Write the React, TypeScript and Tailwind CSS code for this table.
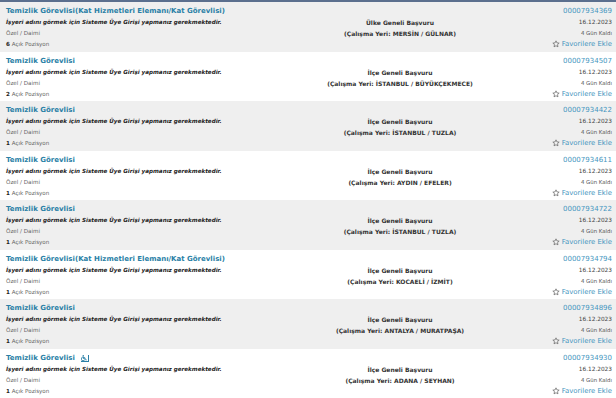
import { FaWheelchair } from "react-icons/fa"

type Job = {
    title: string
    count: number
    scope: string
    place: string
    no: string
    access?: boolean
}

const jobs: Job[] = [
    { title: "Temizlik Görevlisi(Kat Hizmetleri Elemanı/Kat Görevlisi)", count: 6, scope: "Ülke Geneli Başvuru", place: "MERSİN / GÜLNAR", no: "00007934369" },
    { title: "Temizlik Görevlisi", count: 2, scope: "İlçe Geneli Başvuru", place: "İSTANBUL / BÜYÜKÇEKMECE", no: "00007934507" },
    { title: "Temizlik Görevlisi", count: 1, scope: "İlçe Geneli Başvuru", place: "İSTANBUL / TUZLA", no: "00007934422" },
    { title: "Temizlik Görevlisi", count: 1, scope: "İlçe Geneli Başvuru", place: "AYDIN / EFELER", no: "00007934611" },
    { title: "Temizlik Görevlisi", count: 1, scope: "İlçe Geneli Başvuru", place: "İSTANBUL / TUZLA", no: "00007934722" },
    { title: "Temizlik Görevlisi(Kat Hizmetleri Elemanı/Kat Görevlisi)", count: 1, scope: "İlçe Geneli Başvuru", place: "KOCAELİ / İZMİT", no: "00007934794" },
    { title: "Temizlik Görevlisi", count: 1, scope: "İlçe Geneli Başvuru", place: "ANTALYA / MURATPAŞA", no: "00007934896" },
    { title: "Temizlik Görevlisi", count: 1, scope: "İlçe Geneli Başvuru", place: "ADANA / SEYHAN", no: "00007934930", access: true },
]

function StarIcon() {
    return (
        <svg width="8" height="8" viewBox="0 0 24 24" fill="none" stroke="#666" strokeWidth="2.2" strokeLinejoin="round">
            <path d="M12 2.5l2.9 6.2 6.6.7-5 4.5 1.4 6.6L12 17.2l-5.9 3.3 1.4-6.6-5-4.5 6.6-.7z" />
        </svg>
    )
}

export default function App() {
    return (
        <div className="w-[616px] h-[398px] overflow-hidden bg-white border-t-2 border-[#5b6f8e] font-['DejaVu_Sans',Verdana,sans-serif] text-[#333]">
            {jobs.map((j, i) => (
                <div
                    key={j.no}
                    className={`flex h-[49.5px] pt-[4px] leading-[11px] ${i % 2 === 0 ? "bg-[#efefef]" : "bg-white"}`}
                >
                    {/* left: title + info */}
                    <div className="w-[290px] shrink-0 pl-[6px] flex flex-col">
                        <div className="flex items-center gap-[6px] text-[7px] font-bold text-[#2a7fa6] whitespace-nowrap">
                            {j.title}
                            {j.access && (
                                <span className="flex items-end gap-[1px] border-b border-[#2a7fa6] text-[#2a7fa6]">
                                    <FaWheelchair size={6} />
                                    <span className="w-px h-[6px] bg-[#2a7fa6]" />
                                </span>
                            )}
                        </div>
                        <div className="text-[5.6px] font-bold italic text-[#222] whitespace-nowrap">
                            İşyeri adını görmek için Sisteme Üye Girişi yapmanız gerekmektedir.
                        </div>
                        <div className="text-[5.6px] text-[#666]">Özel / Daimi</div>
                        <div className="text-[5.6px] leading-[10px] text-[#666]">
                            <span className="font-bold text-[#222]">{j.count}</span> Açık Pozisyon
                        </div>
                    </div>
                    {/* middle: scope */}
                    <div className="w-[220px] shrink-0 pt-[11px] flex flex-col items-center text-[6px] font-bold text-[#333] whitespace-nowrap">
                        <div>{j.scope}</div>
                        <div>(Çalışma Yeri: {j.place})</div>
                    </div>
                    {/* right: number, date */}
                    <div className="flex-1 pr-[4px] flex flex-col items-end whitespace-nowrap">
                        <div className="text-[7px] text-[#4596c0]">{j.no}</div>
                        <div className="text-[5.8px] text-[#444]">16.12.2023</div>
                        <div className="text-[5.4px] text-[#555]">4 Gün Kaldı</div>
                        <div className="flex items-center gap-[2px] text-[6.9px] leading-[10px] text-[#4596c0]">
                            <StarIcon />
                            Favorilere Ekle
                        </div>
                    </div>
                </div>
            ))}
        </div>
    )
}
